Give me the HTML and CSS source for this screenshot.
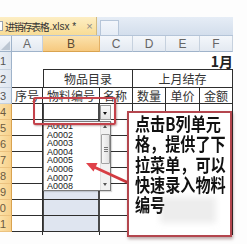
FILE: index.html
```html
<!DOCTYPE html>
<html lang="zh-CN">
<head>
<meta charset="utf-8">
<title>进销存表格</title>
<link rel="stylesheet" href="styles.css">
</head>
<body>
<div class="page">
  <div class="topgap"></div>
  <div class="tabbar">
    <div class="tab"><span class="ticon"></span><span class="tname">进销存表格</span><span class="text">.xlsx *</span><span class="tclose">×</span></div>
    <div class="tab2"></div>
  </div>
  <div class="sheet">
    <!-- column headers -->
    <div class="ch corner"><span class="tri"></span></div>
    <div class="ch">A</div>
    <div class="ch chl">B</div>
    <div class="ch">C</div>
    <div class="ch">D</div>
    <div class="ch">E</div>
    <div class="ch">F</div>
    <div class="blank"></div>
    <!-- row 1 -->
    <div class="rh">1</div>
    <div class="c"></div>
    <div class="c bb"></div>
    <div class="c bb"></div>
    <div class="c bb"></div>
    <div class="c bb"></div>
    <div class="c bb title">1月</div>
    <div class="blank"></div>
    <!-- row 2 -->
    <div class="rh">2</div>
    <div class="c bb"></div>
    <div class="c bb br bl span2 ctr">物品目录</div>
    <div class="c bb br span3 ctr">上月结存</div>
    <div class="blank"></div>
    <!-- row 3 -->
    <div class="rh">3</div>
    <div class="c bb br ctr">序号</div>
    <div class="c bb br ctr">物料编号</div>
    <div class="c bb br lft">名称</div>
    <div class="c bb br ctr">数量</div>
    <div class="c bb br ctr">单价</div>
    <div class="c bb br ctr">金额</div>
    <div class="blank"></div>
    <!-- row 4 -->
    <div class="rh rhl">4</div>
    <div class="c bb br"></div>
    <div class="c bb br sel act"></div>
    <div class="c bb br"></div>
    <div class="c bb br"></div>
    <div class="c bb br"></div>
    <div class="c bb br"></div>
    <div class="blank"></div>
    <!-- row 5 -->
    <div class="rh rhl">5</div>
    <div class="c bb br"></div>
    <div class="c bb br sel"></div>
    <div class="c bb br"></div>
    <div class="c bb br"></div>
    <div class="c bb br"></div>
    <div class="c bb br"></div>
    <div class="blank"></div>
    <!-- row 6 -->
    <div class="rh rhl">6</div>
    <div class="c bb br"></div>
    <div class="c bb br sel"></div>
    <div class="c bb br"></div>
    <div class="c bb br"></div>
    <div class="c bb br"></div>
    <div class="c bb br"></div>
    <div class="blank"></div>
    <!-- row 7 -->
    <div class="rh rhl">7</div>
    <div class="c bb br"></div>
    <div class="c bb br sel"></div>
    <div class="c bb br"></div>
    <div class="c bb br"></div>
    <div class="c bb br"></div>
    <div class="c bb br"></div>
    <div class="blank"></div>
    <!-- row 8 -->
    <div class="rh rhl">8</div>
    <div class="c bb br"></div>
    <div class="c bb br sel"></div>
    <div class="c bb br"></div>
    <div class="c bb br"></div>
    <div class="c bb br"></div>
    <div class="c bb br"></div>
    <div class="blank"></div>
    <!-- row 9 -->
    <div class="rh rhl">9</div>
    <div class="c bb br"></div>
    <div class="c bb br sel"></div>
    <div class="c bb br"></div>
    <div class="c bb br"></div>
    <div class="c bb br"></div>
    <div class="c bb br"></div>
    <div class="blank"></div>
    <!-- row 10 -->
    <div class="rh rhl">10</div>
    <div class="c bb br"></div>
    <div class="c bb br sel"></div>
    <div class="c bb br"></div>
    <div class="c bb br"></div>
    <div class="c bb br"></div>
    <div class="c bb br"></div>
    <div class="blank"></div>
    <!-- row 11 -->
    <div class="rh rhl">11</div>
    <div class="c bb br"></div>
    <div class="c bb br sel"></div>
    <div class="c bb br"></div>
    <div class="c bb br"></div>
    <div class="c bb br"></div>
    <div class="c bb br"></div>
    <div class="blank"></div>
    <!-- row 12 (cut) -->
    <div class="blank"></div>
    <div class="c tick"></div>
    <div class="c tick"></div>
    <div class="c tick"></div>
    <div class="c tick"></div>
    <div class="c tick"></div>
    <div class="c tick"></div>
    <div class="blank"></div>
  </div>

  <div class="ddlist">
    <div class="items">
      <div class="it">A0001</div>
      <div class="it">A0002</div>
      <div class="it">A0003</div>
      <div class="it">A0004</div>
      <div class="it">A0005</div>
      <div class="it">A0006</div>
      <div class="it">A0007</div>
      <div class="it">A0008</div>
    </div>
    <div class="sbar">
      <span class="sarrow up"></span>
      <span class="thumb"><span class="grip"></span></span>
      <span class="sarrow down"></span>
    </div>
  </div>
  <div class="ddbtn"><span class="dtri"></span></div>
  <div class="redbox"></div>

  <svg class="arrowsvg" width="247" height="244" viewBox="0 0 247 244">
    <defs>
      <linearGradient id="ag" x1="130" y1="183" x2="86" y2="163" gradientUnits="userSpaceOnUse">
        <stop offset="0" stop-color="#c9363c"/>
        <stop offset="1" stop-color="#e2444a"/>
      </linearGradient>
    </defs>
    <line x1="131" y1="184" x2="94" y2="167" stroke="url(#ag)" stroke-width="3"/>
    <polygon points="86,163 97.5,163 93.5,171.5" fill="#e0424a"/>
  </svg>

  <div class="callout">
    <div class="ctext">点击B列单元<br>格，提供了下<br>拉菜单，可以<br>快速录入物料<br>编号</div>
  </div>
  <div class="wm"></div>
</div>
</body>
</html>
```

FILE: styles.css
```css
* { box-sizing: border-box; }
html, body { margin: 0; padding: 0; }
body {
  background: #fdfdfd;
  font-family: "Noto Sans CJK SC", "Liberation Sans", sans-serif;
}
.page {
  position: relative;
  width: 247px;
  height: 244px;
  overflow: hidden;
  background: #fdfdfd;
}
.topgap { height: 17px; }

/* tab bar */
.tabbar {
  display: flex;
  align-items: flex-end;
  width: 233px;
  height: 19px;
  background: linear-gradient(#e6edf6, #d3deec);
  border-bottom: 1px solid #b4c4d8;
}
.tab {
  display: flex;
  align-items: center;
  width: 97px;
  height: 18px;
  background: linear-gradient(#fdeec4, #f8dc95);
  border-right: 1px solid #d2bb82;
  font-size: 10px;
  color: #333;
}
.ticon {
  width: 3px;
  height: 10px;
  border: 1px solid #9aa3ad;
  border-left: none;
  background: #fff;
  margin-right: 2px;
}
.tname { letter-spacing: -1.3px; font-size: 10px; }
.text { font-family: "Liberation Sans", sans-serif; font-size: 10px; white-space: pre; margin-left: 1px; }
.tclose { margin-left: 10px; color: #8a8a8a; font-family: "Liberation Sans", sans-serif; font-size: 11px; }
.tab2 {
  width: 19px;
  height: 15px;
  margin-left: 3px;
  background: linear-gradient(#f3f6fb, #e5ecf5);
  border: 1px solid #b7c6d9;
  border-bottom: none;
}

/* sheet grid */
.sheet {
  display: grid;
  grid-template-columns: 12px 31px 57px 33px 33px 34px 33px 14px;
  grid-template-rows: 16px 18px 18px 16px repeat(8, 16px) 12px;
}
.ch {
  display: flex;
  align-items: center;
  justify-content: center;
  background: linear-gradient(#f4f7fb, #e3e9f1);
  border-right: 1px solid #c6d1de;
  border-bottom: 1px solid #9fb3ca;
  font-family: "Liberation Sans", sans-serif;
  font-size: 12px;
  color: #666;
}
.chl {
  background: linear-gradient(#fbe2ad, #f6c97f);
  border-right-color: #e2b066;
  border-bottom-color: #d9a34f;
  color: #5a4a33;
}
.corner { position: relative; border-right-color: #9fb3ca; }
.tri {
  position: absolute;
  right: 1px;
  bottom: 1px;
  width: 0;
  height: 0;
  border-left: 9px solid transparent;
  border-bottom: 9px solid #bcc6d2;
}
.blank { background: #fdfdfd; }
.rh {
  display: flex;
  align-items: center;
  justify-content: flex-end;
  overflow: hidden;
  padding-right: 5px;
  background: linear-gradient(90deg, #e9eef5, #dfe6ef);
  border-right: 1px solid #9fb3ca;
  border-bottom: 1px solid #c6d1de;
  font-family: "Liberation Sans", sans-serif;
  font-size: 11px;
  color: #555;
}
.rhl {
  background: linear-gradient(90deg, #fbe0a6, #f7d08b);
  border-right-color: #d9a34f;
  border-bottom-color: #ebc27f;
  color: #6b5a40;
}
.c {
  display: flex;
  align-items: center;
  background: #fff;
  font-size: 12px;
  color: #333;
  overflow: hidden;
  white-space: nowrap;
}
.bb { border-bottom: 1px solid #2e2e2e; }
.br { border-right: 1px solid #2e2e2e; }
.bl { border-left: 1px solid #2e2e2e; }
.span2 { grid-column: span 2; }
.span3 { grid-column: span 3; }
.ctr { justify-content: center; }
.lft { justify-content: flex-start; padding-left: 3px; }
.title {
  justify-content: flex-end;
  font-size: 14px;
  font-weight: bold;
  color: #222;
  border-bottom: 1px solid #2e2e2e;
  padding-top: 1px;
}
.sel {
  background: #dfe5f0;
  box-shadow: inset 1px 0 0 #4a4a4a;
  border-right: 2px solid #4a4a4a;
}
.act { background: #fff; }
.tick {
  background: linear-gradient(#2e2e2e, #2e2e2e) right top / 1px 3px no-repeat;
  background-color: #fdfdfd;
}

/* dropdown */
.ddlist {
  position: absolute;
  left: 43px;
  top: 121px;
  width: 68px;
  height: 70px;
  display: flex;
  background: #fff;
  border: 1px solid #7b7b7b;
  box-shadow: 1px 1px 1px rgba(0,0,0,0.15);
}
.items {
  flex: 1;
  padding-left: 3px;
  font-family: "Liberation Sans", sans-serif;
  font-size: 9px;
  color: #222;
}
.it { height: 8.6px; line-height: 8.6px; }
.sbar {
  position: relative;
  width: 10px;
  background: #f1f1f1;
  border-left: 1px solid #e0e0e0;
}
.sarrow {
  position: absolute;
  left: 2px;
  width: 0;
  height: 0;
  border-left: 2.5px solid transparent;
  border-right: 2.5px solid transparent;
}
.sarrow.up { top: 3px; border-bottom: 3px solid #555; }
.sarrow.down { bottom: 4px; border-top: 3px solid #555; }
.thumb {
  position: absolute;
  left: 0;
  top: 12px;
  width: 9px;
  height: 30px;
  background: linear-gradient(90deg, #f7f7f7, #e2e2e2);
  border: 1px solid #a2a2a2;
  border-radius: 1px;
}
.grip {
  position: absolute;
  left: 2px;
  top: 12px;
  width: 4px;
  height: 5px;
  background: repeating-linear-gradient(#777 0 1px, transparent 1px 2px);
}
.ddbtn {
  position: absolute;
  left: 100px;
  top: 105px;
  width: 11px;
  height: 15px;
  background: linear-gradient(#fafafa, #e4e4e4);
  border: 1px solid #9a9a9a;
}
.dtri {
  position: absolute;
  left: 2px;
  top: 6px;
  width: 0;
  height: 0;
  border-left: 2.5px solid transparent;
  border-right: 2.5px solid transparent;
  border-top: 3px solid #111;
}
.redbox {
  position: absolute;
  left: 33px;
  top: 97px;
  width: 83px;
  height: 28px;
  border: 2.5px solid #c4424b;
  border-radius: 2px;
  box-shadow: 1px 1px 2px rgba(90,0,0,0.35), inset 0 0 1px rgba(90,0,0,0.3);
}
.arrowsvg {
  position: absolute;
  left: 0;
  top: 0;
}

/* callout */
.callout {
  position: absolute;
  left: 127px;
  top: 111px;
  width: 105px;
  height: 126px;
  background: #fff;
  border: 2px solid #b4464e;
  box-shadow: 1px 2px 3px rgba(60,0,0,0.35);
  padding: 0 0 0 6px;
}
.ctext {
  font-size: 18px;
  line-height: 20.3px;
  font-weight: bold;
  color: #111;
  white-space: nowrap;
  transform: scaleX(0.84);
  transform-origin: left top;
}
.wm {
  position: absolute;
  left: 160px;
  top: 197px;
  width: 56px;
  height: 26px;
  background: rgba(175,175,175,0.22);
  filter: blur(3px);
}
```
